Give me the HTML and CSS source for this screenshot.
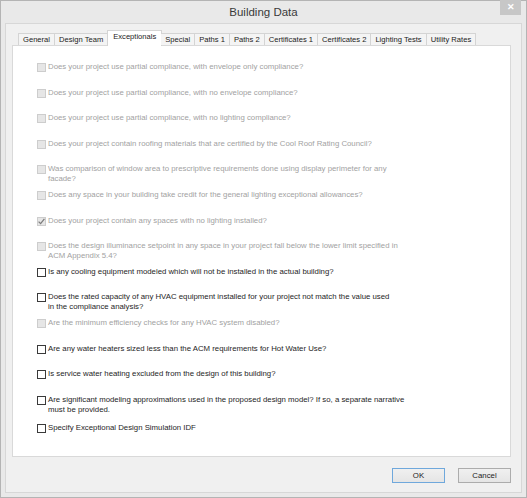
FILE: index.html
```html
<!DOCTYPE html>
<html>
<head>
  <title>Building Data</title>
  <link rel="stylesheet" href="styles.css">
</head>
<body>

  <div class="window">
    <div class="titlebar">
      <span class="title">Building Data</span>
      <span class="close">&#x2715;</span>
    </div>

    <div class="client">
      <ul class="tabs">
        <li>General</li>
        <li>Design Team</li>
        <li class="active">Exceptionals</li>
        <li>Special</li>
        <li>Paths 1</li>
        <li>Paths 2</li>
        <li>Certificates 1</li>
        <li>Certificates 2</li>
        <li>Lighting Tests</li>
        <li>Utility Rates</li>
      </ul>

      <div class="panel">
        <label class="option disabled"><span class="box"></span><span class="text">Does your project use partial compliance, with envelope only compliance?</span></label>
        <label class="option disabled"><span class="box"></span><span class="text">Does your project use partial compliance, with no envelope compliance?</span></label>
        <label class="option disabled"><span class="box"></span><span class="text">Does your project use partial compliance, with no lighting compliance?</span></label>
        <label class="option disabled"><span class="box"></span><span class="text">Does your project contain roofing materials that are certified by the Cool Roof Rating Council?</span></label>
        <label class="option disabled"><span class="box"></span><span class="text">Was comparison of window area to prescriptive requirements done using display perimeter for any<br>facade?</span></label>
        <label class="option disabled"><span class="box"></span><span class="text">Does any space in your building take credit for the general lighting exceptional allowances?</span></label>
        <label class="option disabled checked"><span class="box"><svg width="9" height="9" viewBox="0 0 9 9"><path d="M1.6 4.6 L3.6 6.6 L7.4 1.8" fill="none" stroke="#7d7d7d" stroke-width="1.3"/></svg></span><span class="text">Does your project contain any spaces with no lighting installed?</span></label>
        <label class="option disabled"><span class="box"></span><span class="text">Does the design illuminance setpoint in any space in your project fall below the lower limit specified in<br>ACM Appendix 5.4?</span></label>
        <label class="option"><span class="box"></span><span class="text">Is any cooling equipment modeled which will not be installed in the actual building?</span></label>
        <label class="option"><span class="box"></span><span class="text">Does the rated capacity of any HVAC equipment installed for your project not match the value used<br>in the compliance analysis?</span></label>
        <label class="option disabled"><span class="box"></span><span class="text">Are the minimum efficiency checks for any HVAC system disabled?</span></label>
        <label class="option"><span class="box"></span><span class="text">Are any water heaters sized less than the ACM requirements for Hot Water Use?</span></label>
        <label class="option"><span class="box"></span><span class="text">Is service water heating excluded from the design of this building?</span></label>
        <label class="option"><span class="box"></span><span class="text">Are significant modeling approximations used in the proposed design model? If so, a separate narrative<br>must be provided.</span></label>
        <label class="option last"><span class="box"></span><span class="text">Specify Exceptional Design Simulation IDF</span></label>
      </div>

      <div class="buttons">
        <button class="btn default">OK</button>
        <button class="btn">Cancel</button>
      </div>
    </div>
  </div>

</body>
</html>
```

FILE: styles.css
```css
body {
  margin: 0;
  font-family: "Liberation Sans", Arial, sans-serif;
  background-color: #e8e8e8;
}

.window {
  width: 527px;
  height: 498px;
  box-sizing: border-box;
  border: 1px solid #b4b4b4;
  background-color: #e9e9e9;
  display: flex;
  flex-direction: column;
}

/* title bar */
.titlebar {
  height: 22px;
  display: grid;
  grid-template-columns: 1fr auto 1fr;
  align-items: start;
}

.title {
  grid-column: 2;
  font-size: 11.5px;
  line-height: 22px;
  color: #3a3a3a;
}

.close {
  grid-column: 3;
  justify-self: end;
  width: 21px;
  height: 15px;
  margin-right: 5px;
  margin-top: -1px;
  background-color: #c7c7c7;
  color: #fff;
  font-size: 9px;
  font-weight: bold;
  line-height: 15px;
  text-align: center;
}

/* dialog body */
.client {
  flex: 1;
  margin: 0 4px 4px 4px;
  border: 1px solid #d7d7d7;
  background-color: #f0f0f0;
  padding: 6px 10px 0 6px;
  display: flex;
  flex-direction: column;
}

.tabs {
  list-style: none;
  margin: 0 0 0 6px;
  padding: 0;
  display: flex;
  align-items: flex-end;
  position: relative;
  z-index: 1;
}

.tabs li {
  height: 11px;
  padding: 0 4px;
  border: 1px solid #d4d4d4;
  border-bottom: none;
  border-left: none;
  background-color: #f4f4f4;
  font-size: 7.6px;
  line-height: 12px;
  color: #222;
}

.tabs li:first-child {
  border-left: 1px solid #d4d4d4;
}

.tabs li.active {
  height: 15px;
  margin: 0 -1px -1px -1px;
  padding: 0 5px;
  border-left: 1px solid #d4d4d4;
  background-color: #fff;
  line-height: 11px;
}

.panel {
  height: 412px;
  box-sizing: border-box;
  border: 1px solid #d9d9d9;
  background-color: #fff;
  padding: 16px 0 0 24px;
  display: grid;
  grid-auto-rows: 25.6px;
  align-content: start;
}

.option {
  display: flex;
  align-items: flex-start;
  gap: 2px;
  font-size: 7.8px;
  line-height: 10px;
  color: #1e1e1e;
}

.option .text {
  white-space: nowrap;
}

.option .box {
  width: 7px;
  height: 7px;
  margin-top: 1px;
  border: 1px solid #3a3a3a;
  background-color: #fff;
  flex: none;
}

.option .box svg {
  display: block;
  margin: -1px 0 0 -1px;
}

.option.disabled {
  color: #a2a2a2;
}

.option.disabled .box {
  border-color: #cdcdcd;
  background-color: #e6e6e6;
}

.option.last {
  margin-top: 3px;
}

/* OK / Cancel */
.buttons {
  display: flex;
  justify-content: flex-end;
  gap: 13px;
  margin-top: 11px;
}

.btn {
  width: 53px;
  height: 15px;
  padding: 0;
  border: 1px solid #acacac;
  background: linear-gradient(#f0f0f0, #e5e5e5);
  font-family: "Liberation Sans", Arial, sans-serif;
  font-size: 7.8px;
  color: #222;
}

.btn.default {
  border-color: #6fa8dc;
}
```
